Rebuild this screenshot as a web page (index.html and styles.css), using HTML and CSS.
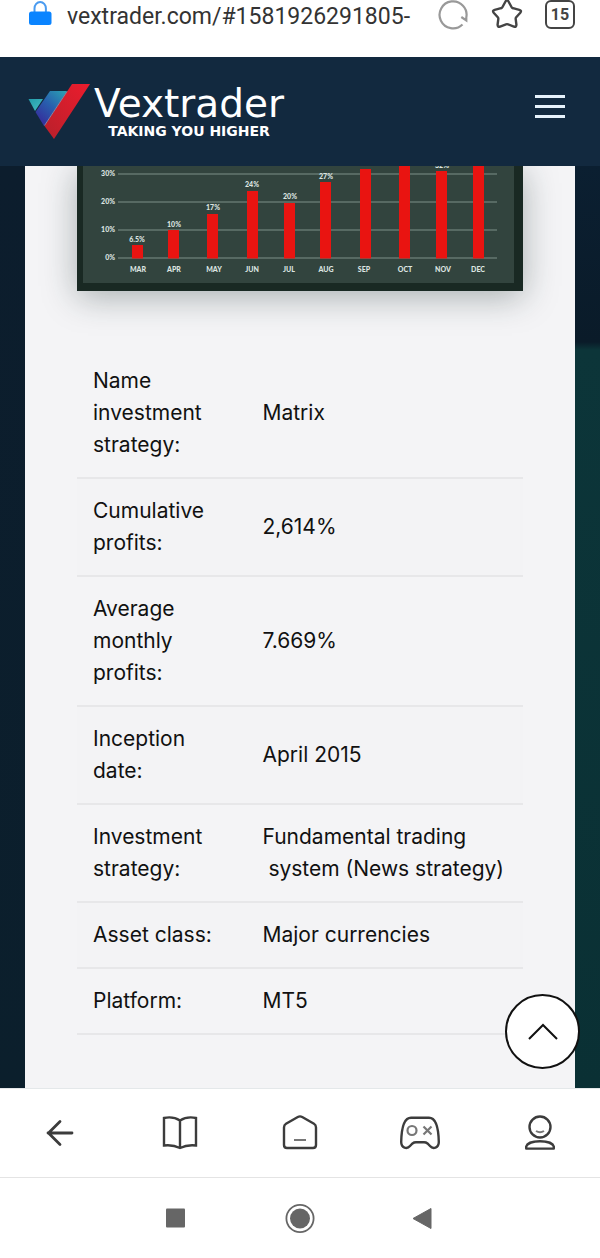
FILE: index.html
```html
<!DOCTYPE html>
<html lang="en">
<head>
<meta charset="utf-8">
<meta name="viewport" content="width=device-width, initial-scale=1">
<title>Vextrader</title>
<link rel="stylesheet" href="styles.css">
</head>
<body>
<div class="address-bar">
  <svg class="icon" viewBox="0 0 32 32" aria-hidden="true"><path d="M10.500 12V8.500a5.700 6.500 0 0 1 11.400 0V12" fill="none" stroke="#4a9bf0" stroke-width="2"/><rect x="5" y="11.500" width="22.500" height="13.500" rx="2.500" fill="#0a84ff"/></svg>
  <input class="url" type="text" aria-label="Address" value="vextrader.com/#1581926291805-">
  <div class="address-actions">
    <button class="plain" aria-label="Reload"><svg class="icon" viewBox="0 0 32 32"><path d="M25.500 24.500A13.500 13.500 0 1 1 29.300 17.500V20.500L24.300 17" fill="none" stroke="#999" stroke-width="2.200"/></svg></button>
    <button class="plain" aria-label="Bookmark"><svg class="icon" viewBox="0 0 32 32"><path d="M14.500 1.500Q16-1 17.500 1.500L20.500 7Q21 8 22 8.200L28.300 9.800Q31 10.600 29.300 12.700L25.200 17.300Q24.500 18.100 24.700 19.200L25.400 24.500Q25.500 27.400 22.900 26.500L17 24.300Q16 24 15 24.300L9.100 26.500Q6.500 27.400 6.600 24.500L7.300 19.200Q7.500 18.100 6.800 17.300L2.700 12.700Q1 10.600 3.700 9.800L10 8.200Q11 8 11.500 7Z" fill="none" stroke="#444" stroke-width="2.400"/></svg></button>
    <button class="plain tabs" aria-label="15 open tabs">15</button>
  </div>
</div>

<header class="site-header">
  <a class="logo" href="#">
    <svg class="logo-mark" viewBox="0 0 62 56" aria-hidden="true">
      <defs>
        <linearGradient id="teal" x1="0" y1="0" x2="1" y2="1"><stop offset="0" stop-color="#239baa"/><stop offset="1" stop-color="#46bfc4"/></linearGradient>
        <linearGradient id="blue" x1="1" y1="0" x2="0.200" y2="1"><stop offset="0" stop-color="#2ba5b3"/><stop offset="0.500" stop-color="#2860ae"/><stop offset="1" stop-color="#37299b"/></linearGradient>
        <linearGradient id="red" x1="1" y1="0" x2="0" y2="1"><stop offset="0" stop-color="#ec1c2d"/><stop offset="1" stop-color="#b8202b"/></linearGradient>
      </defs>
      <path d="M0.500 15H15L7 27Z" fill="url(#teal)"/>
      <path d="M22 7H39L16 42L7.500 28Z" fill="url(#blue)"/>
      <path d="M44 0H62L26 55L16.500 42Z" fill="url(#red)"/>
      <path d="M39 7.500L16.500 41.500" stroke="#a7a6c7" stroke-width="0.700"/>
    </svg>
    <span class="logo-text"><span class="logo-name">Vextrader</span><span class="logo-tag">TAKING YOU HIGHER</span></span>
  </a>
  <button class="plain menu" aria-label="Menu"><span></span><span></span><span></span></button>
</header>

<main class="page">
  <section class="card">
    <svg class="chart" viewBox="0 0 446 125" role="img" aria-label="Monthly profits">
      <rect width="446" height="125" fill="#192923"/>
      <rect x="6" width="431" height="117" fill="#32443e"/>
      <path d="M41 8H420M41 36H420M41 64H420M41 92H420" stroke="#647770" stroke-width="1.500"/>
      <g fill="#e91411">
        <rect x="55" y="79" width="11" height="13.500"/><rect x="91" y="64" width="11" height="28.500"/>
        <rect x="130" y="48" width="11" height="44.500"/><rect x="170" y="25" width="11" height="67.500"/>
        <rect x="207" y="37" width="11" height="55.500"/><rect x="243" y="16" width="11" height="76.500"/>
        <rect x="283" y="3" width="11" height="89.500"/><rect x="322" y="0" width="11" height="92.500"/>
        <rect x="359" y="5" width="11" height="87.500"/><rect x="396" y="0" width="11" height="92.500"/>
      </g>
      <g class="axis">
        <text x="38" y="10">30%</text><text x="38" y="38">20%</text><text x="38" y="66">10%</text><text x="38" y="94">0%</text>
      </g>
      <g class="labels">
        <text x="60" y="76">6.5%</text><text x="97" y="61">10%</text><text x="136" y="44">17%</text><text x="175" y="21">24%</text><text x="213" y="33">20%</text><text x="249" y="13">27%</text><text x="365" y="2">32%</text>
        <text x="61" y="106">MAR</text><text x="97" y="106">APR</text><text x="137" y="106">MAY</text><text x="175" y="106">JUN</text><text x="212" y="106">JUL</text><text x="249" y="106">AUG</text><text x="287" y="106">SEP</text><text x="328" y="106">OCT</text><text x="366" y="106">NOV</text><text x="401" y="106">DEC</text>
      </g>
    </svg>

    <table class="facts">
      <tr><th scope="row">Name investment strategy:</th><td>Matrix</td></tr>
      <tr><th scope="row">Cumulative profits:</th><td>2,614%</td></tr>
      <tr><th scope="row">Average monthly profits:</th><td>7.669%</td></tr>
      <tr><th scope="row">Inception date:</th><td>April 2015</td></tr>
      <tr><th scope="row">Investment strategy:</th><td>Fundamental trading<br>&nbsp;system (News strategy)</td></tr>
      <tr><th scope="row">Asset class:</th><td>Major currencies</td></tr>
      <tr><th scope="row">Platform:</th><td>MT5</td></tr>
    </table>
  </section>
  <button class="to-top" aria-label="Back to top"><svg viewBox="0 0 32 18"><path d="M2 16L16 2L30 16" fill="none" stroke="#111" stroke-width="2"/></svg></button>
</main>

<nav class="browser-nav" aria-label="Browser">
  <button class="plain" aria-label="Back"><svg viewBox="0 0 40 40"><path d="M32 20H8M20 8.500L8.500 20L20 31.500" fill="none" stroke="#3c3c3c" stroke-width="2.800" stroke-linecap="round" stroke-linejoin="round"/></svg></button>
  <button class="plain" aria-label="Bookmarks"><svg viewBox="0 0 40 40"><path d="M20 7.500Q13 3 4 5V32.500Q13 31.500 20 35Q27 31.500 36 32.500V5Q27 3 20 7.500ZM20 7.500V35" fill="none" stroke="#3c3c3c" stroke-width="2.400"/></svg></button>
  <button class="plain" aria-label="Home"><svg viewBox="0 0 40 40"><path d="M17.800 4Q20 2.700 22.200 4L34 10.800Q36 12 36 14.500V32Q36 35 33 35H7Q4 35 4 32V14.500Q4 12 6 10.800Z" fill="none" stroke="#3c3c3c" stroke-width="2.400"/><path d="M14 27H26" stroke="#777" stroke-width="2"/></svg></button>
  <button class="plain" aria-label="Games"><svg viewBox="0 0 40 40"><path d="M11 4.700H29C36 4.700 38.500 14 38.800 29C38.800 35 33 36.500 30 33L27.500 30.500Q26 29.300 24 29.300H16Q14 29.300 12.500 30.500L10 33C7 36.500 1.200 35 1.200 29C1.500 14 4 4.700 11 4.700Z" fill="none" stroke="#3c3c3c" stroke-width="2.400"/><g fill="none" stroke="#777" stroke-width="2.200"><circle cx="12" cy="17.500" r="4.500"/><path d="M23.500 13.500L31.500 21.500M31.500 13.500L23.500 21.500"/></g></svg></button>
  <button class="plain" aria-label="Profile"><svg viewBox="0 0 40 40"><g fill="none" stroke="#3c3c3c" stroke-width="2.400"><circle cx="20" cy="14" r="10.500"/><path d="M6.200 35.600V33.500C8 26.500 32 26.500 33.800 33.500V35.600Z" stroke-linejoin="round"/></g><path d="M16 18Q20 20.500 24 18" fill="none" stroke="#777" stroke-width="2"/></svg></button>
</nav>

<nav class="system-nav" aria-label="System">
  <button class="plain" aria-label="Recent apps"><svg viewBox="0 0 40 40"><rect x="8" y="10.500" width="19" height="19" rx="1" fill="#666"/></svg></button>
  <button class="plain" aria-label="Home screen"><svg viewBox="0 0 40 40"><circle cx="20" cy="20.500" r="13.600" fill="none" stroke="#666" stroke-width="1.800"/><circle cx="20" cy="20.500" r="10" fill="#666"/></svg></button>
  <button class="plain" aria-label="System back"><svg viewBox="0 0 40 40"><path d="M11 20.500L29 10.500V30.500Z" fill="#666" stroke="#666" stroke-linejoin="round"/></svg></button>
</nav>
</body>
</html>
```
FILE: styles.css
```css
* { box-sizing: border-box; }
body {
  margin: 0;
  min-height: 100vh;
  display: flex;
  flex-direction: column;
  background: #fff;
  color: #111;
  font-family: "Inter", sans-serif;
}
svg { display: block; }
.plain {
  display: flex;
  align-items: center;
  justify-content: center;
  padding: 0;
  border: 0;
  background: none;
}
.icon { width: 32px; height: 32px; flex: none; }

.address-bar {
  display: flex;
  align-items: flex-start;
  height: 57px;
  padding: 0 25px 0 24px;
}
.url {
  flex: 1;
  min-width: 0;
  height: 32px;
  margin-left: 11px;
  padding: 0;
  border: 0;
  color: #333;
  font: 23px "Roboto", sans-serif;
}
.address-actions { display: flex; gap: 22px; }
.tabs {
  width: 30px;
  height: 29px;
  border: 2px solid #444;
  border-radius: 6px;
  color: #444;
  font: bold 16px "Roboto", sans-serif;
}

.site-header {
  display: flex;
  align-items: center;
  justify-content: space-between;
  height: 109px;
  padding: 0 35px 0 28px;
  background: #12293f;
}
.logo {
  display: flex;
  align-items: center;
  gap: 4px;
  color: #fff;
  text-decoration: none;
  font-family: "DejaVu Sans", sans-serif;
}
.logo-mark { width: 62px; height: 56px; }
.logo-text { display: flex; flex-direction: column; align-items: center; }
.logo-name { font-size: 39px; line-height: 38px; }
.logo-tag { font-size: 14px; font-weight: bold; line-height: 16px; }
.menu { flex-direction: column; gap: 7px; width: 30px; padding-bottom: 10px; }
.menu span { width: 30px; height: 3px; background: #e6f1fb; }

.page {
  position: relative;
  flex: 1;
  display: flex;
  padding: 0 25px;
  background:
    linear-gradient(#0c1d2d, #0b1f2c) left / 50% 100% no-repeat,
    linear-gradient(#0b1f31, #0a1b29 176px, #0c3539 184px, #0a3034) right / 50% 100% no-repeat;
}
.card {
  flex: 1;
  min-width: 0;
  padding: 0 52px 50px;
  overflow: hidden;
  background: #f4f4f6;
}
.chart {
  width: 100%;
  height: auto;
  box-shadow: 0 6px 32px rgba(25, 45, 45, 0.35);
}
.chart text { font: 900 7px "Lato", sans-serif; fill: #dde5e1; }
.axis { text-anchor: end; }
.labels { text-anchor: middle; }

.facts {
  width: 100%;
  margin-top: 58px;
  border-collapse: separate;
  border-spacing: 0;
  font-size: 21px;
  line-height: 32px;
}
.facts th, .facts td {
  padding: 16px;
  border-bottom: 2px solid #e7e7e9;
  font-weight: 400;
  text-align: left;
  vertical-align: middle;
}
.facts th { width: 38%; padding-right: 24px; }
.facts td { padding-right: 0; }
.facts tr:nth-child(even) { background: #f3f3f5; }

.to-top {
  position: absolute;
  right: 20px;
  bottom: 19px;
  display: flex;
  align-items: center;
  justify-content: center;
  width: 75px;
  height: 75px;
  padding: 0;
  border: 2px solid #111;
  border-radius: 50%;
  background: #fff;
}
.to-top svg { width: 32px; height: 18px; }

.browser-nav {
  display: grid;
  grid-template-columns: repeat(5, 1fr);
  height: 90px;
  border-top: 1px solid #e4e8ea;
  border-bottom: 1px solid #e4e4e4;
}
.browser-nav svg, .system-nav svg { width: 40px; height: 40px; }
.system-nav {
  display: flex;
  align-items: center;
  justify-content: center;
  gap: 82px;
  height: 80px;
}
```
